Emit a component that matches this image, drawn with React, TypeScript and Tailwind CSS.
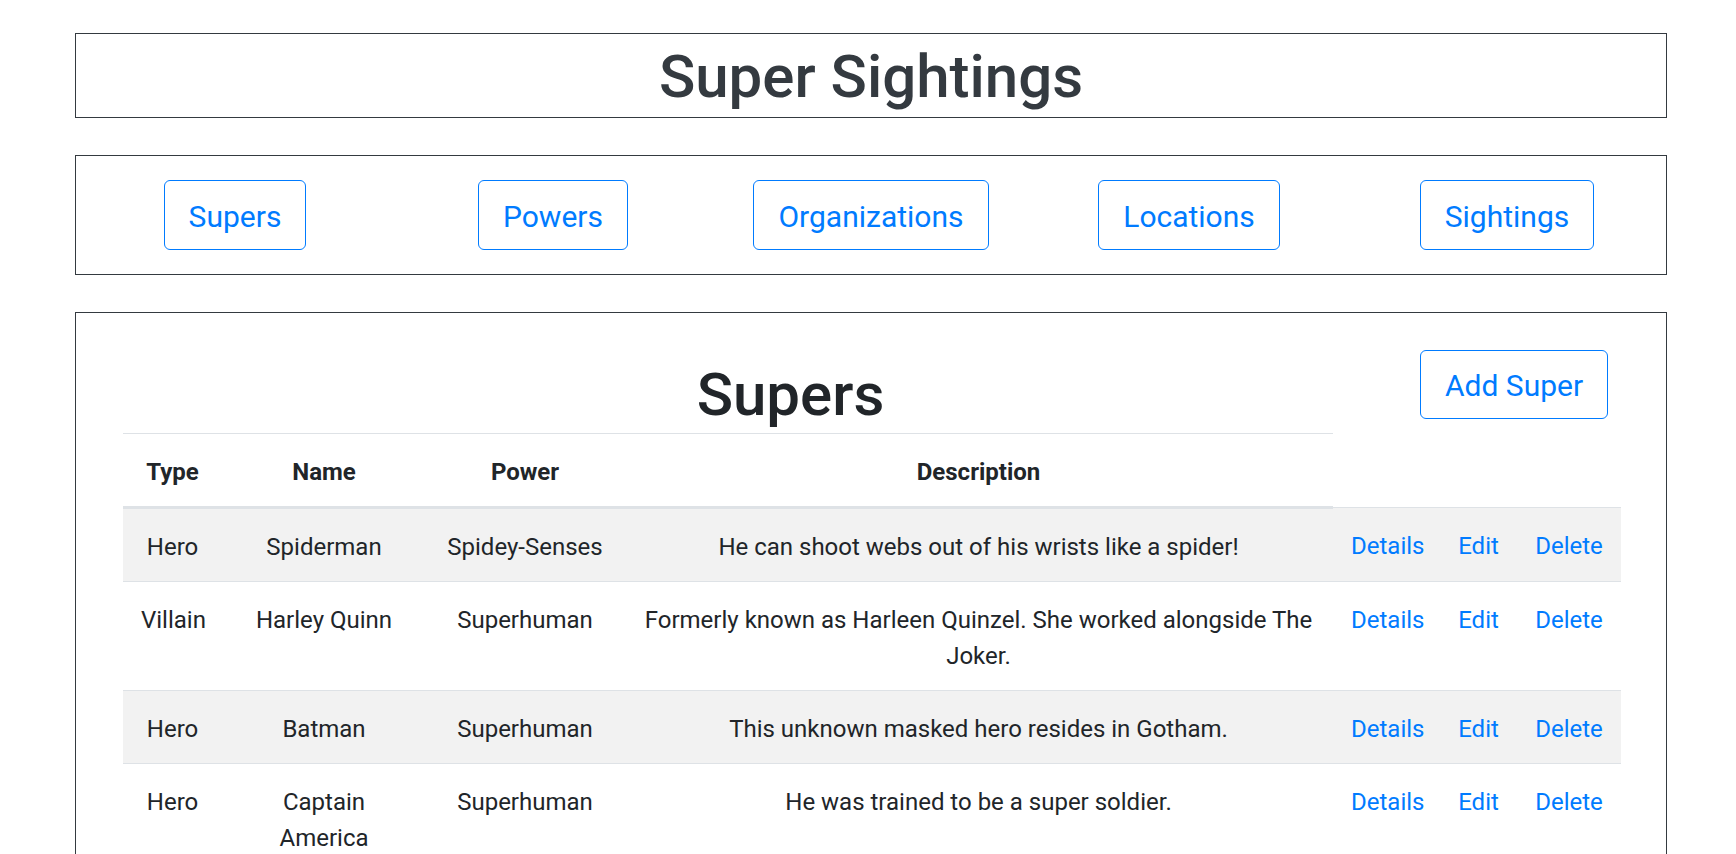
const navItems = ["Supers", "Powers", "Organizations", "Locations", "Sightings"];

const supers = [
  {
    type: "Hero",
    name: "Spiderman",
    power: "Spidey-Senses",
    desc: "He can shoot webs out of his wrists like a spider!",
  },
  {
    type: "Villain",
    name: "Harley Quinn",
    power: "Superhuman",
    desc: "Formerly known as Harleen Quinzel. She worked alongside The Joker.",
  },
  {
    type: "Hero",
    name: "Batman",
    power: "Superhuman",
    desc: "This unknown masked hero resides in Gotham.",
  },
  {
    type: "Hero",
    name: "Captain America",
    power: "Superhuman",
    desc: "He was trained to be a super soldier.",
  },
];

function NavButton({ label }: { label: string }) {
  return (
    <div className="flex justify-center">
      <button className="px-[24px] pt-[14px] pb-[10px] text-[30px] leading-[44px] text-[#007bff] border border-[#007bff] rounded-[6px] bg-white">
        {label}
      </button>
    </div>
  );
}

export default function App() {
  const cell = "px-[18px] pt-[20px] pb-[16px] align-top border-t border-[#dee2e6]";

  return (
    <div
      className="min-h-screen bg-white text-[#212529] text-[24px] leading-[36px] pt-[33px]"
      style={{ fontFamily: "Roboto, 'Noto Sans', sans-serif" }}
    >
      <div className="w-[1592px] ml-[75px]">
        <div className="border border-[#343a40] h-[85px] flex items-center justify-center pt-[3px]">
          <h1 className="text-[60px] leading-[72px] font-medium text-[#343a40]">
            Super Sightings
          </h1>
        </div>

        <div className="mt-[37px] border border-[#343a40] pt-[24px] pb-[24px] grid grid-cols-5">
          {navItems.map((item) => (
            <NavButton key={item} label={item} />
          ))}
        </div>

        <div className="mt-[37px] border border-[#343a40] pt-[37px] pl-[47px] pr-[45px] pb-[40px]">
          <div className="flex">
            <div className="w-[1297px] pl-[38px] text-center mt-[9px]">
              <h1 className="text-[60px] leading-[72px] font-medium">Supers</h1>
            </div>
            <div>
              <button className="px-[24px] pt-[13px] pb-[10px] text-[30px] leading-[44px] text-[#007bff] border border-[#007bff] rounded-[6px] bg-white">
                Add Super
              </button>
            </div>
          </div>

          <table className="mt-[2px] w-[1498px] border-collapse text-center table-fixed">
            <colgroup>
              <col className="w-[99px]" />
              <col className="w-[204px]" />
              <col className="w-[198px]" />
              <col className="w-[709px]" />
              <col className="w-[107px]" />
              <col className="w-[77px]" />
              <col className="w-[104px]" />
            </colgroup>
            <thead>
              <tr>
                {["Type", "Name", "Power", "Description"].map((h) => (
                  <th
                    key={h}
                    className="px-[18px] pt-[20px] pb-[16px] font-bold border-t border-b-[3px] border-[#dee2e6]"
                  >
                    {h}
                  </th>
                ))}
              </tr>
            </thead>
            <tbody>
              {supers.map((s, i) => (
                <tr key={i} className={i % 2 === 0 ? "bg-[#f2f2f2]" : "bg-white"}>
                  <td className={cell}>{s.type}</td>
                  <td className={cell}>{s.name}</td>
                  <td className={cell}>{s.power}</td>
                  <td className={cell}>{s.desc}</td>
                  <td className={cell}>
                    <a href="#" className="text-[#007bff]">Details</a>
                  </td>
                  <td className={cell}>
                    <a href="#" className="text-[#007bff]">Edit</a>
                  </td>
                  <td className={cell}>
                    <a href="#" className="text-[#007bff]">Delete</a>
                  </td>
                </tr>
              ))}
            </tbody>
          </table>
        </div>
      </div>
    </div>
  );
}
